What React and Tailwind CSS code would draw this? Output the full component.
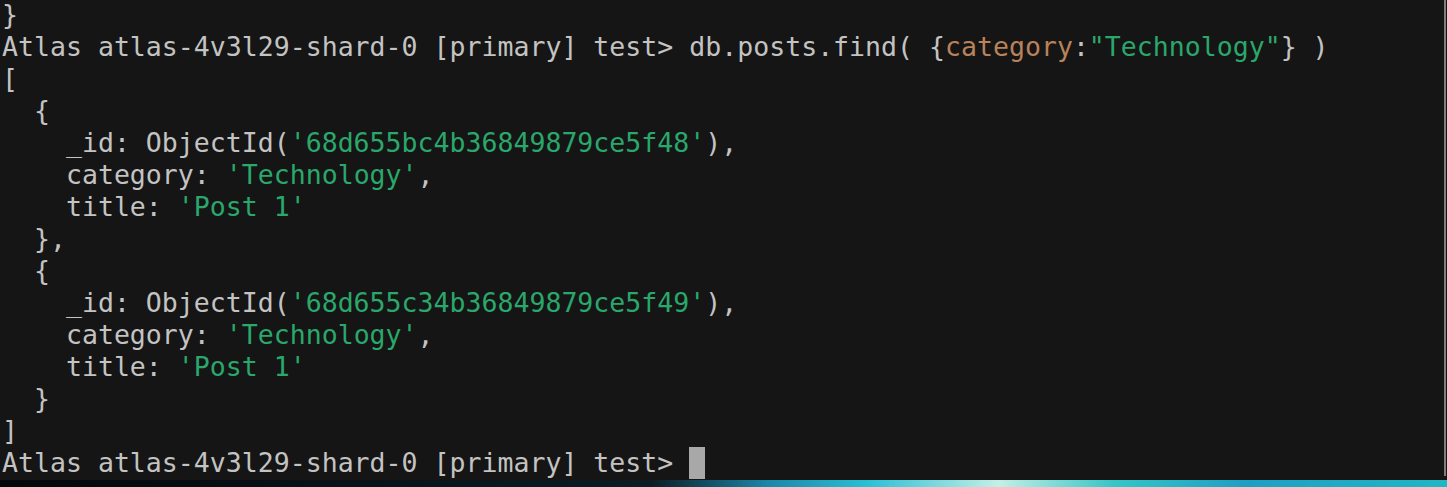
const G = ({ children }) => <span className="text-[#2aa76c]">{children}</span>;
const O = ({ children }) => <span className="text-[#b9825a]">{children}</span>;

const prompt = "Atlas atlas-4v3l29-shard-0 [primary] test> ";

const Doc = ({ id, last }) => (
  <>
    <div>{"  {"}</div>
    <div>
      {"    _id: ObjectId("}
      <G>{`'${id}'`}</G>
      {"),"}
    </div>
    <div>
      {"    category: "}
      <G>'Technology'</G>
      {","}
    </div>
    <div>
      {"    title: "}
      <G>'Post 1'</G>
    </div>
    <div>{last ? "  }" : "  },"}</div>
  </>
);

export default function App() {
  return (
    <div className="w-full h-[487px] flex flex-col bg-black">
      <div className="relative h-[480px] bg-[#151515] overflow-hidden">
        <div className="-mt-px pl-[2px] whitespace-pre text-[#c3c3c3] text-[26.55px] leading-[32px] font-['DejaVu_Sans_Mono',monospace]">
          <div>{"}"}</div>
          <div>
            {prompt}
            {"db.posts.find( {"}
            <O>category</O>
            {":"}
            <G>"Technology"</G>
            {"} )"}
          </div>
          <div>[</div>
          <Doc id="68d655bc4b36849879ce5f48" />
          <Doc id="68d655c34b36849879ce5f49" last />
          <div>]</div>
          <div>
            {prompt}
            <span className="inline-block w-[16px] h-[32px] align-top bg-[#a8a8a8]" />
          </div>
        </div>
        <div className="absolute right-[1px] top-0 bottom-[4px] w-[2px] bg-[#7d7d7d]" />
      </div>
      <div className="h-[7px] bg-[linear-gradient(90deg,#04070a_0%,#0b1c24_45%,#1b86a8_53%,#2bc0d4_60%,#c4efe6_69%,#35c6c6_77%,#1d9fc4_86%,#22b6c4_100%)]" />
    </div>
  );
}
